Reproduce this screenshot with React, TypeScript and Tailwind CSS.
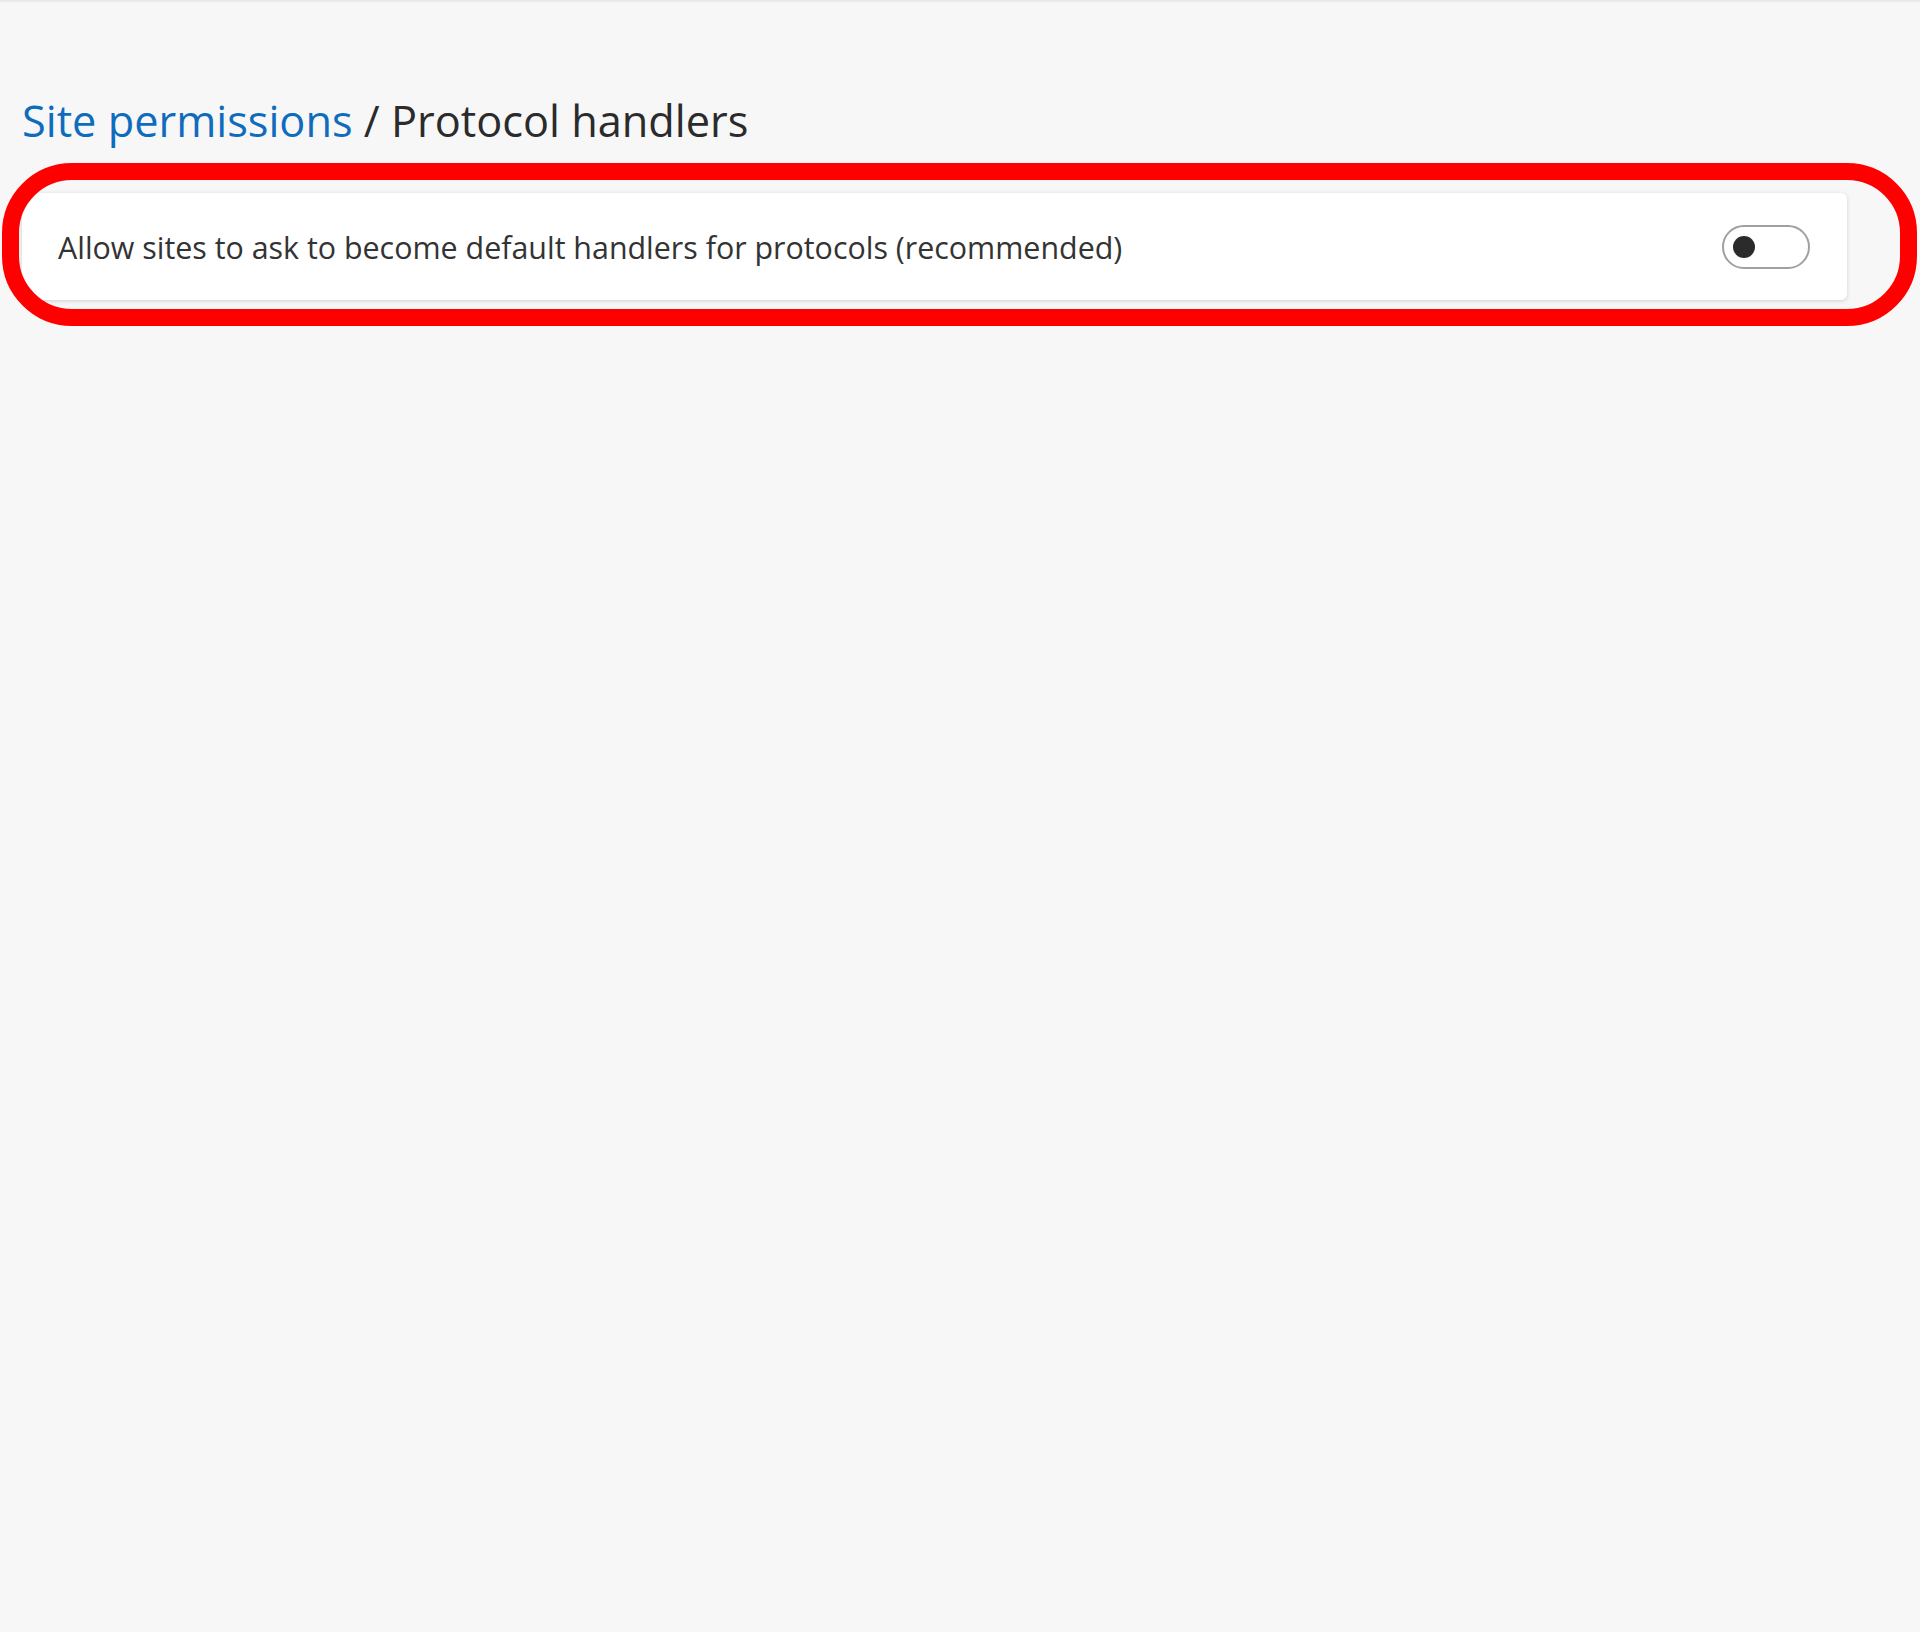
import React from "react";

export default function App() {
  return (
    <div
      className="relative min-h-[1632px] w-full bg-[#f7f7f7]"
      style={{ fontFamily: '"Open Sans", "Noto Sans", sans-serif' }}
    >
      <div className="h-[3px] w-full bg-gradient-to-b from-[#e4e4e4] to-[#f7f7f7]" />
      <div className="pl-[22px] pr-[73px]">
        <h1 className="mt-[96px] text-[43.3px] leading-[43px] font-normal text-[#2b2b2b] whitespace-nowrap">
          <span className="text-[#0f6cbd]">Site permissions</span> / Protocol handlers
        </h1>
        <div className="mt-[51px] flex h-[107px] items-center justify-between rounded-[6px] bg-white pl-[36px] pr-[37px] shadow-[0_1px_4px_rgba(0,0,0,0.16)]">
          <span className="pt-[2px] text-[30.4px] leading-[40px] text-[#333333] whitespace-nowrap">
            Allow sites to ask to become default handlers for protocols (recommended)
          </span>
          <div className="flex h-[44px] w-[88px] items-center rounded-full border-2 border-[#a0a0a0] bg-white pl-[9px]">
            <div className="h-[22px] w-[22px] rounded-full bg-[#2b2b2b]" />
          </div>
        </div>
      </div>
      <div className="pointer-events-none absolute left-[2px] top-[163px] h-[163px] w-[1915px] rounded-[70px] border-[17px] border-[#ff0000]" />
    </div>
  );
}
